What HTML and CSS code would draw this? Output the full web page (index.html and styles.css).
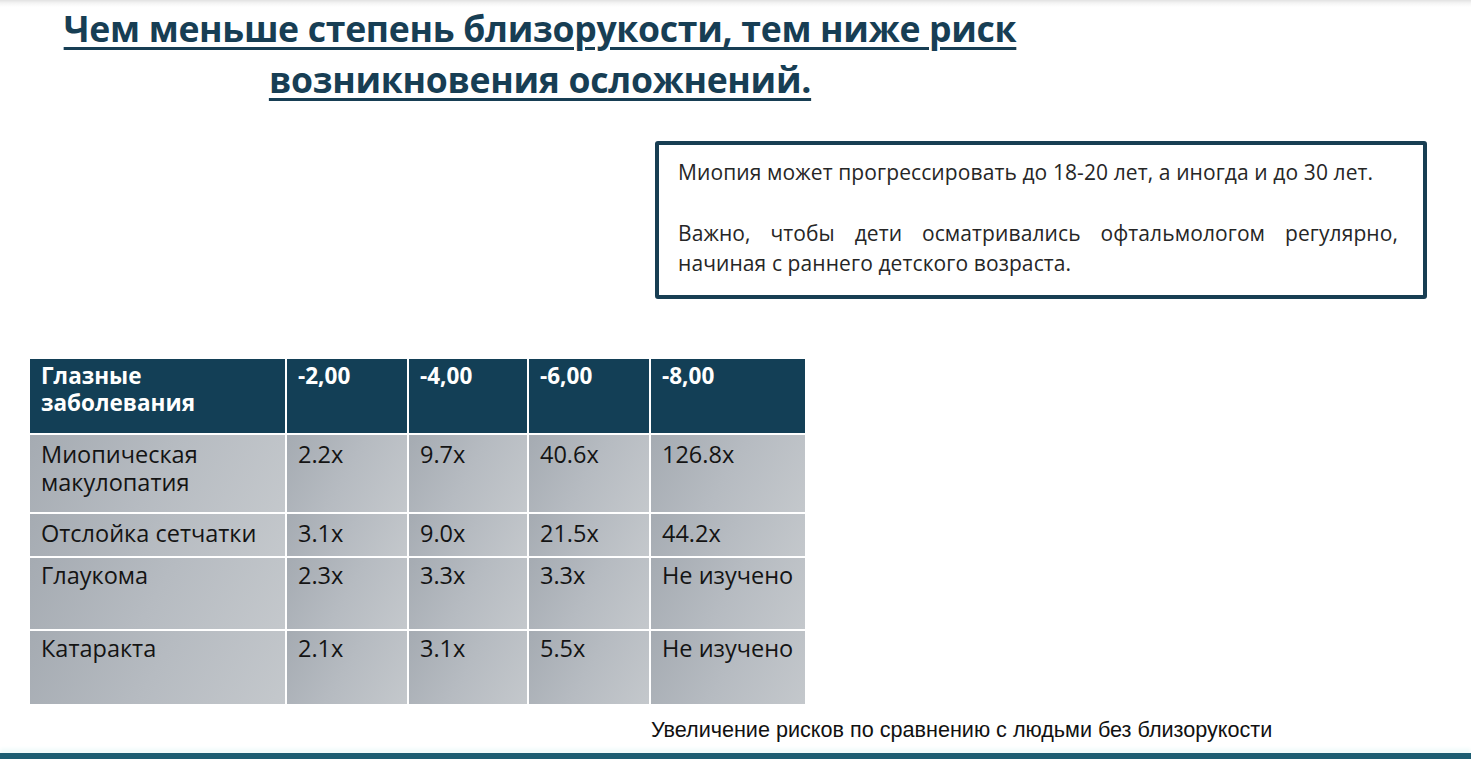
FILE: index.html
```
<!DOCTYPE html>
<html lang="ru">
<head>
<meta charset="utf-8">
<link rel="stylesheet" href="styles.css">
</head>
<body>
<div class="slide">
  <header class="title-wrap">
    <h1 class="title">Чем меньше степень близорукости, тем ниже риск<br>возникновения осложнений.</h1>
  </header>
  <div class="note-row">
    <div class="note">
      <p class="note-p">Миопия может прогрессировать до 18-20 лет, а иногда и до 30 лет.</p>
      <p class="note-p note-just">Важно, чтобы дети осматривались офтальмологом регулярно, начиная с раннего детского возраста.</p>
    </div>
  </div>
  <div class="table">
    <div class="th">Глазные заболевания</div>
    <div class="th">-2,00</div>
    <div class="th">-4,00</div>
    <div class="th">-6,00</div>
    <div class="th">-8,00</div>

    <div class="td">Миопическая макулопатия</div>
    <div class="td">2.2x</div>
    <div class="td">9.7x</div>
    <div class="td">40.6x</div>
    <div class="td">126.8x</div>

    <div class="td">Отслойка сетчатки</div>
    <div class="td">3.1x</div>
    <div class="td">9.0x</div>
    <div class="td">21.5x</div>
    <div class="td">44.2x</div>

    <div class="td td-n">Глаукома</div>
    <div class="td td-n">2.3x</div>
    <div class="td td-n">3.3x</div>
    <div class="td td-n">3.3x</div>
    <div class="td td-n">Не изучено</div>

    <div class="td td-n">Катаракта</div>
    <div class="td td-n">2.1x</div>
    <div class="td td-n">3.1x</div>
    <div class="td td-n">5.5x</div>
    <div class="td td-n">Не изучено</div>
  </div>
  <p class="caption">Увеличение рисков по сравнению с людьми без близорукости</p>
  <div class="bottom-bar"></div>
</div>
</body>
</html>
```

FILE: styles.css
```
html, body {
  margin: 0;
  padding: 0;
  background: #ffffff;
}
.slide {
  position: relative;
  width: 1471px;
  height: 759px;
  overflow: hidden;
  background: linear-gradient(to bottom, #e2e2e2 0px, #f4f4f4 3px, #ffffff 7px);
  display: flex;
  flex-direction: column;
}
.title-wrap {
  width: 1080px;
  padding-top: 3px;
}
.title {
  margin: 0;
  text-align: center;
  font-family: "Open Sans", "DejaVu Sans", sans-serif;
  font-weight: 700;
  font-size: 35.6px;
  line-height: 51px;
  color: #173e54;
  text-decoration: underline;
  text-decoration-thickness: 3px;
  text-underline-offset: 5px;
  letter-spacing: -0.3px;
}
.note-row {
  display: flex;
  justify-content: flex-end;
  padding-right: 44px;
  margin-top: 36px;
}
.note {
  box-sizing: border-box;
  width: 772px;
  height: 158px;
  border: 4px solid #183e53;
  border-radius: 3px;
  padding: 12px 25px 0 19px;
  font-family: "Open Sans", "DejaVu Sans", sans-serif;
  font-size: 21px;
  line-height: 30px;
  color: #262626;
  letter-spacing: 0.1px;
}
.note-p {
  margin: 0 0 31px 0;
}
.note-just {
  text-align: justify;
  margin: 0;
}
.table {
  margin-top: 60px;
  margin-left: 30px;
  display: grid;
  grid-template-columns: 255px 120px 118px 120px 154px;
  grid-template-rows: 74px 77px 42px 71px 73px;
  gap: 2px;
  width: 775px;
  background: #ffffff;
  font-family: "Open Sans", "DejaVu Sans", sans-serif;
}
.th {
  background: #133f56;
  color: #ffffff;
  font-weight: 700;
  font-size: 22.5px;
  line-height: 27px;
  padding: 3px 10px 0 11px;
}
.td {
  background: linear-gradient(120deg, #a5abb2 0%, #b6bbc1 50%, #c4c8cc 100%);
  color: #141414;
  font-size: 23.5px;
  line-height: 28px;
  padding: 5px 6px 0 11px;
}
.td-n {
  padding-top: 3px;
}
.caption {
  margin: 14px 0 0 651px;
  font-family: "Liberation Sans", Arial, sans-serif;
  font-size: 21.6px;
  line-height: 24px;
  color: #111111;
}
.bottom-bar {
  margin-top: auto;
  height: 6px;
  background: #1c5d72;
  box-shadow: 0 -4px 4px #eefafa;
}
```
